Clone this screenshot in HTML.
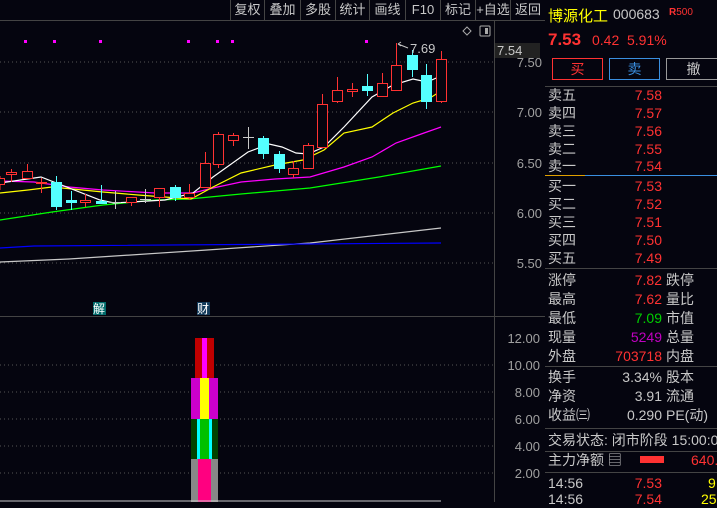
<!DOCTYPE html>
<html><head><meta charset="utf-8"><style>
*{margin:0;padding:0;box-sizing:border-box}
body{width:717px;height:502px;background:#05050f;overflow:hidden;position:relative;font-family:"Liberation Sans","Noto Sans CJK SC",sans-serif;color:#c8c8c8}
.a{position:absolute;white-space:nowrap}
.tb{position:absolute;top:0;height:20px;border-left:1px solid #444;color:#c8c8c8;font-size:13px;line-height:20px;text-align:center}
.r{color:#ff3232}.g{color:#00d000}.p{color:#c000c0}.y{color:#ffff00}
.row{position:absolute;left:548px;width:169px;height:18px;font-size:14px;line-height:18px;white-space:nowrap;overflow:hidden}
.row .l{position:absolute;left:0;white-space:nowrap}
.row .v{position:absolute;right:55px}
.row .l2{position:absolute;left:118px;white-space:nowrap}
.hl{position:absolute;left:545px;width:172px;height:1px;background:#444}
</style></head><body>
<svg class="a" style="left:0;top:0" width="545" height="502">
<line x1="0" y1="20.5" x2="545" y2="20.5" stroke="#444"/>
<line x1="494.5" y1="20" x2="494.5" y2="502" stroke="#444"/>
<line x1="0" y1="316.5" x2="545" y2="316.5" stroke="#444"/>
<line x1="545.5" y1="0" x2="545.5" y2="502" stroke="#444"/>
<g stroke="#555" stroke-dasharray="1,3">
<line x1="0" y1="62" x2="494" y2="62"/><line x1="0" y1="112" x2="494" y2="112"/><line x1="0" y1="163" x2="494" y2="163"/><line x1="0" y1="213" x2="494" y2="213"/><line x1="0" y1="263" x2="494" y2="263"/>
<line x1="0" y1="365" x2="494" y2="365"/><line x1="0" y1="392" x2="494" y2="392"/><line x1="0" y1="419" x2="494" y2="419"/><line x1="0" y1="446" x2="494" y2="446"/><line x1="0" y1="473" x2="494" y2="473"/>
</g>
<g fill="#ff00ff"><rect x="24" y="40" width="3" height="3"/><rect x="53" y="40" width="3" height="3"/><rect x="99" y="40" width="3" height="3"/><rect x="187" y="40" width="3" height="3"/><rect x="216" y="40" width="3" height="3"/><rect x="231" y="40" width="3" height="3"/><rect x="365" y="40" width="3" height="3"/></g>
<path d="M467 27l4 4-4 4-4-4z" fill="none" stroke="#aaa"/>
<rect x="480" y="26" width="10" height="10" fill="none" stroke="#aaa" rx="1"/><rect x="485" y="28" width="3" height="6" fill="#aaa"/>
<g fill="none" stroke-width="1.2">
<polyline stroke="#c8c8c8" points="0,262 69,259 207,250 310,243 441,228"/>
<polyline stroke="#0000ff" points="0,248 34,246 441,243"/>
<polyline stroke="#00ff00" points="0,220 52,212 103,205 155,200 189,199 241,194 310,188 379,177 441,166"/>
<polyline stroke="#ff00ff" points="0,181 34,182 69,187 103,190 155,193 193,193 213,188 241,182 275,179 310,177 344,167 372,157 396,143 424,133 441,127"/>
<polyline stroke="#ffff00" points="0,193 28,190 52,187 103,192 138,195 191,199 213,187 241,173 275,165 303,160 324,150 344,133 372,127 393,113 413,103 430,98 441,91"/>
<polyline stroke="#ffffff" points="0,183 41,177 100,200 114,203 165,200 193,193 213,177 248,152 269,144 282,147 296,153 308,154 324,147 344,127 372,97 393,85 413,79 427,82 441,76"/>
</g>
<g stroke-width="1">
<g stroke="#ff3232" fill="#05050f">
<line x1="0" y1="176" x2="0" y2="190"/><rect x="-4.5" y="178.5" width="9" height="6"/>
<line x1="11.5" y1="169" x2="11.5" y2="182"/><rect x="6.5" y="172.5" width="10" height="2"/>
<line x1="27.5" y1="164" x2="27.5" y2="178"/><rect x="22.5" y="171.5" width="10" height="7"/>
<line x1="41.5" y1="178" x2="41.5" y2="193"/><rect x="36.5" y="182.5" width="10" height="1"/>
<line x1="85.5" y1="194" x2="85.5" y2="207"/><rect x="80.5" y="200.5" width="10" height="2"/>
<line x1="131.5" y1="197" x2="131.5" y2="206"/><rect x="126.5" y="197.5" width="10" height="5"/>
<line x1="159.5" y1="188" x2="159.5" y2="207"/><rect x="154.5" y="188.5" width="10" height="9"/>
<line x1="189.5" y1="184" x2="189.5" y2="199"/><rect x="184.5" y="193.5" width="10" height="4"/>
<line x1="205.5" y1="152" x2="205.5" y2="187"/><rect x="200.5" y="163.5" width="10" height="24"/>
<line x1="218.5" y1="132" x2="218.5" y2="168"/><rect x="213.5" y="134.5" width="10" height="30"/>
<line x1="233.5" y1="133" x2="233.5" y2="146"/><rect x="228.5" y="135.5" width="10" height="5"/>
<line x1="293.5" y1="161" x2="293.5" y2="178"/><rect x="288.5" y="168.5" width="10" height="6"/>
<line x1="308.5" y1="143" x2="308.5" y2="168"/><rect x="303.5" y="145.5" width="10" height="23"/>
<line x1="322.5" y1="94" x2="322.5" y2="147"/><rect x="317.5" y="104.5" width="10" height="43"/>
<line x1="337.5" y1="77" x2="337.5" y2="103"/><rect x="332.5" y="90.5" width="10" height="11"/>
<line x1="352.5" y1="83" x2="352.5" y2="97"/><rect x="347.5" y="89.5" width="10" height="2"/>
<line x1="382.5" y1="73" x2="382.5" y2="96"/><rect x="377.5" y="83.5" width="10" height="13"/>
<line x1="396.5" y1="43" x2="396.5" y2="90"/><rect x="391.5" y="65.5" width="10" height="25"/>
<line x1="441.5" y1="51" x2="441.5" y2="103"/><rect x="436.5" y="59.5" width="10" height="42"/>
</g>
<g stroke="#54ffff" fill="#54ffff">
<line x1="56.5" y1="176" x2="56.5" y2="210"/><rect x="51.5" y="182.5" width="10" height="24"/>
<line x1="71.5" y1="191" x2="71.5" y2="210"/><rect x="66.5" y="200.5" width="10" height="2"/>
<line x1="101.5" y1="185" x2="101.5" y2="204"/><rect x="96.5" y="201.5" width="10" height="2"/>
<line x1="175.5" y1="185" x2="175.5" y2="201"/><rect x="170.5" y="187.5" width="10" height="10"/>
<line x1="263.5" y1="136" x2="263.5" y2="159"/><rect x="258.5" y="138.5" width="10" height="15"/>
<line x1="279.5" y1="151" x2="279.5" y2="173"/><rect x="274.5" y="154.5" width="10" height="14"/>
<line x1="367.5" y1="74" x2="367.5" y2="96"/><rect x="362.5" y="86.5" width="10" height="4"/>
<line x1="412.5" y1="50" x2="412.5" y2="77"/><rect x="407.5" y="55.5" width="10" height="14"/>
<line x1="426.5" y1="64" x2="426.5" y2="109"/><rect x="421.5" y="75.5" width="10" height="26"/>
</g>
<g stroke="#c8c8c8">
<line x1="115.5" y1="191" x2="115.5" y2="209"/><line x1="110" y1="202.5" x2="121" y2="202.5"/>
<line x1="145.5" y1="189" x2="145.5" y2="203"/><line x1="140" y1="199.5" x2="151" y2="199.5"/>
<line x1="248.5" y1="127" x2="248.5" y2="149"/><line x1="243" y1="137.5" x2="254" y2="137.5"/>
</g>
</g>
<path d="M398 44l10 4M398 44l3-2M398 44l3 2" stroke="#c8c8c8" fill="none"/>
<text x="410" y="53" fill="#c8c8c8" font-size="13" font-family="Liberation Sans">7.69</text>
<rect x="495" y="43" width="45" height="15" fill="#222"/>
<text x="497" y="55" fill="#c8c8c8" font-size="13" font-family="Liberation Sans">7.54</text>
<g fill="#a0a0a0" font-size="13" font-family="Liberation Sans" text-anchor="end">
<text x="542" y="67">7.50</text><text x="542" y="117">7.00</text><text x="542" y="168">6.50</text><text x="542" y="218">6.00</text><text x="542" y="268">5.50</text>
<text x="540" y="343">12.00</text><text x="540" y="370">10.00</text><text x="540" y="397">8.00</text><text x="540" y="424">6.00</text><text x="540" y="451">4.00</text><text x="540" y="478">2.00</text>
</g>
<rect x="93" y="302" width="13" height="13" fill="#006a6a"/><text x="93" y="313" fill="#fff" font-size="12" font-family="Noto Sans CJK SC">解</text>
<rect x="197" y="302" width="13" height="13" fill="#123a5a"/><text x="197" y="313" fill="#fff" font-size="12" font-family="Noto Sans CJK SC">财</text>
<rect x="195" y="338" width="19" height="40" fill="#c00000"/><rect x="202" y="338" width="5" height="40" fill="#ff00ff"/>
<rect x="191" y="378" width="27" height="41" fill="#cc00cc"/><rect x="200" y="378" width="9" height="41" fill="#ffff00"/>
<rect x="191" y="419" width="27" height="40" fill="#004400"/><rect x="197" y="419" width="15" height="40" fill="#00ffff"/><rect x="200" y="419" width="9" height="40" fill="#00c000"/>
<rect x="191" y="459" width="27" height="43" fill="#888"/><rect x="198" y="459" width="13" height="43" fill="#ff0080"/>
<line x1="0" y1="501" x2="441" y2="501" stroke="#ccc"/>
</svg>
<div class="tb" style="left:230px;width:34px">复权</div>
<div class="tb" style="left:264px;width:36px">叠加</div>
<div class="tb" style="left:300px;width:35px">多股</div>
<div class="tb" style="left:335px;width:34px">统计</div>
<div class="tb" style="left:369px;width:36px">画线</div>
<div class="tb" style="left:405px;width:35px">F10</div>
<div class="tb" style="left:440px;width:35px">标记</div>
<div class="tb" style="left:475px;width:35px">+自选</div>
<div class="tb" style="left:510px;width:35px">返回</div>

<div class="a y" style="left:548px;top:5px;font-size:15px">博源化工</div>
<div class="a" style="left:613px;top:6px;font-size:14px;color:#c8c8c8">000683</div>
<div class="a r" style="left:669px;top:7px;font-size:10px"><b>R</b>500</div>
<div class="a r" style="left:548px;top:30px;font-size:17px;font-weight:bold">7.53</div>
<div class="a r" style="left:592px;top:32px;font-size:14px">0.42</div>
<div class="a r" style="left:627px;top:32px;font-size:14px">5.91%</div>
<div class="a r" style="left:552px;top:58px;width:51px;height:22px;border:1px solid #ff3232;text-align:center;font-size:14px;line-height:20px">买</div>
<div class="a" style="left:609px;top:58px;width:51px;height:22px;border:1px solid #3a8fe0;color:#3a8fe0;text-align:center;font-size:14px;line-height:20px">卖</div>
<div class="a" style="left:666px;top:58px;width:55px;height:22px;border:1px solid #999;text-align:center;font-size:14px;line-height:20px">撤</div>
<div class="hl" style="top:86px"></div>
<div class="row" style="top:86px"><span class="l">卖五</span><span class="v r">7.58</span></div>
<div class="row" style="top:104px"><span class="l">卖四</span><span class="v r">7.57</span></div>
<div class="row" style="top:122px"><span class="l">卖三</span><span class="v r">7.56</span></div>
<div class="row" style="top:140px"><span class="l">卖二</span><span class="v r">7.55</span></div>
<div class="row" style="top:157px"><span class="l">卖一</span><span class="v r">7.54</span></div>
<div class="a" style="left:545px;top:175px;width:40px;height:1px;background:#e0a000"></div>
<div class="a" style="left:585px;top:175px;width:132px;height:1px;background:#3a8fe0"></div>
<div class="row" style="top:177px"><span class="l">买一</span><span class="v r">7.53</span></div>
<div class="row" style="top:195px"><span class="l">买二</span><span class="v r">7.52</span></div>
<div class="row" style="top:213px"><span class="l">买三</span><span class="v r">7.51</span></div>
<div class="row" style="top:231px"><span class="l">买四</span><span class="v r">7.50</span></div>
<div class="row" style="top:249px"><span class="l">买五</span><span class="v r">7.49</span></div>
<div class="hl" style="top:268px"></div>
<div class="row" style="top:271px"><span class="l">涨停</span><span class="v r">7.82</span><span class="l2">跌停</span></div>
<div class="row" style="top:290px"><span class="l">最高</span><span class="v r">7.62</span><span class="l2">量比</span></div>
<div class="row" style="top:309px"><span class="l">最低</span><span class="v g">7.09</span><span class="l2">市值</span></div>
<div class="row" style="top:328px"><span class="l">现量</span><span class="v p">5249</span><span class="l2">总量</span></div>
<div class="row" style="top:347px"><span class="l">外盘</span><span class="v r">703718</span><span class="l2">内盘</span></div>
<div class="hl" style="top:366px"></div>
<div class="row" style="top:368px"><span class="l">换手</span><span class="v">3.34%</span><span class="l2">股本</span></div>
<div class="row" style="top:387px"><span class="l">净资</span><span class="v">3.91</span><span class="l2">流通</span></div>
<div class="row" style="top:406px"><span class="l">收益㈢</span><span class="v">0.290</span><span class="l2">PE(动)</span></div>
<div class="hl" style="top:428px"></div>
<div class="row" style="top:431px"><span class="l">交易状态: 闭市阶段 15:00:00</span></div>
<div class="hl" style="top:451px"></div>
<div class="row" style="top:451px"><span class="l">主力净额 ▤</span></div>
<div class="a" style="left:640px;top:456px;width:24px;height:7px;background:#ff3232"></div>
<div class="a r" style="left:691px;top:451px;font-size:14px;line-height:18px;width:26px;overflow:hidden">640.</div>
<div class="hl" style="top:472px"></div>
<div class="row" style="top:474px"><span class="l">14:56</span><span class="v r">7.53</span></div>
<div class="a y" style="left:708px;top:474px;font-size:14px;line-height:18px">9</div>
<div class="row" style="top:490px"><span class="l">14:56</span><span class="v r">7.54</span></div>
<div class="a y" style="left:701px;top:490px;font-size:14px;line-height:18px">25</div>
</body></html>
